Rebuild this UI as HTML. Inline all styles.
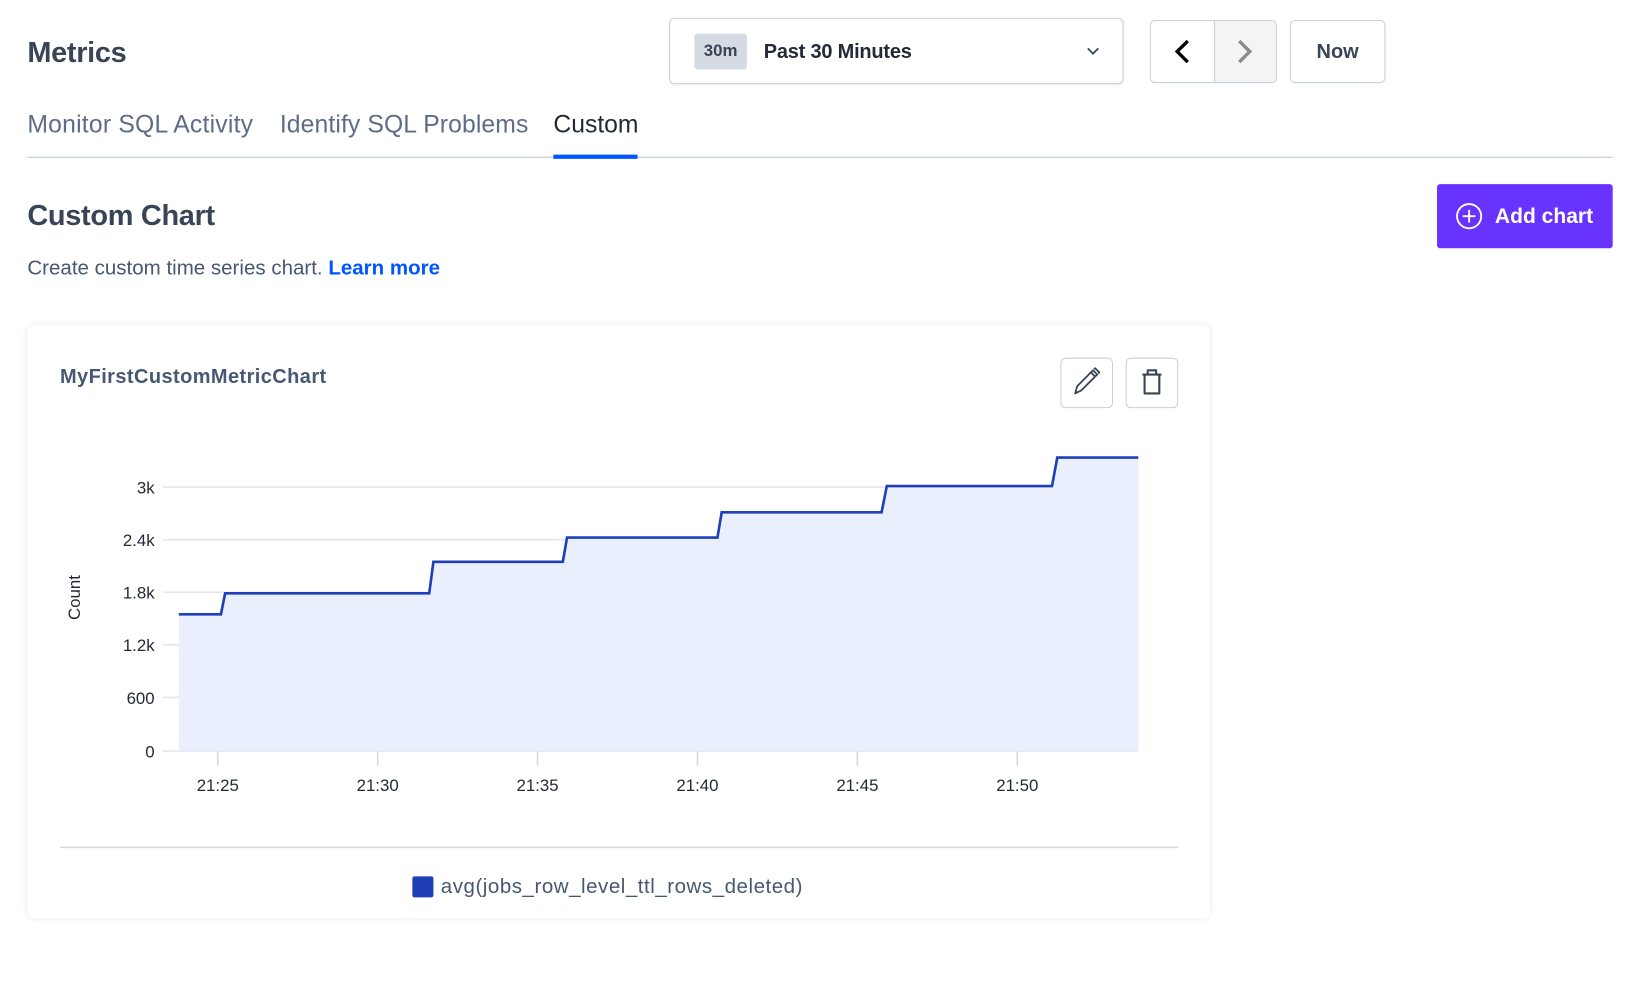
<!DOCTYPE html>
<html><head><meta charset="utf-8"><style>
html,body{margin:0;padding:0;background:#fff;width:1650px;height:982px;overflow:hidden}
#w{position:absolute;left:0;top:0;width:1560px;height:928px;transform:scale(1.052);transform-origin:0 0;font-family:"Liberation Sans",sans-serif;color:#394455}
.a{position:absolute;white-space:nowrap}
.box{position:absolute;border:1px solid #c9cfdb;border-radius:5px;background:#fff;box-sizing:border-box}
</style></head><body><div id="w">
<div class="a" style="left:26px;top:34px;font-size:27.5px;font-weight:bold;color:#394455;letter-spacing:-0.3px">Metrics</div>

<div class="box" style="left:636px;top:17px;width:432px;height:63px;box-shadow:0 1px 3px rgba(0,0,0,.06)"></div>
<div class="a" style="left:660px;top:32px;width:50px;height:34px;background:#d6dae3;border-radius:3px;font-size:16px;font-weight:bold;line-height:34px;text-align:center;color:#394455">30m</div>
<div class="a" style="left:726px;top:39px;font-size:19px;font-weight:bold;color:#242a35;letter-spacing:-0.2px">Past 30 Minutes</div>
<svg class="a" style="left:1032px;top:44px" width="14" height="10"><path d="M2 2 L7 7 L12 2" fill="none" stroke="#394455" stroke-width="1.6"/></svg>

<div class="box" style="left:1093px;top:19px;width:121px;height:60px;overflow:hidden"><div style="position:absolute;left:60px;top:0;width:61px;height:60px;background:#f4f4f5;border-left:1px solid #c9cfdb"></div></div>
<svg class="a" style="left:1112px;top:36px" width="24" height="26"><path d="M17 3 L7 13 L17 23" fill="none" stroke="#000" stroke-width="3.2"/></svg>
<svg class="a" style="left:1171px;top:36px" width="24" height="26"><path d="M7 3 L17 13 L7 23" fill="none" stroke="#8a8a8a" stroke-width="3.2"/></svg>
<div class="box" style="left:1226px;top:19px;width:91px;height:60px;font-size:19px;font-weight:bold;line-height:60px;text-align:center;color:#394455">Now</div>

<div class="a" style="left:26px;top:105px;font-size:23.5px;color:#5f6c87;letter-spacing:0.2px">Monitor SQL Activity</div>
<div class="a" style="left:266px;top:105px;font-size:23.5px;color:#5f6c87;letter-spacing:0.1px">Identify SQL Problems</div>
<div class="a" style="left:526px;top:105px;font-size:23.5px;color:#242a35;letter-spacing:0px">Custom</div>
<div class="a" style="left:26px;top:149px;width:1507px;height:1px;background:#c0c6d9"></div>
<div class="a" style="left:526px;top:147px;width:80px;height:4px;background:#0055ff"></div>

<div class="a" style="left:26px;top:189px;font-size:27.5px;font-weight:bold;color:#394455;letter-spacing:-0.3px">Custom Chart</div>
<div class="a" style="left:1366px;top:175px;width:167px;height:61px;background:#6933ff;border-radius:3px"></div>
<svg class="a" style="left:1383px;top:192px" width="27" height="27"><circle cx="13.5" cy="13.5" r="11.5" fill="none" stroke="#fff" stroke-width="1.8"/><path d="M13.5 7.5V19.5M7.5 13.5H19.5" stroke="#fff" stroke-width="1.8"/></svg>
<div class="a" style="left:1421px;top:195px;font-size:20px;font-weight:bold;color:#fff">Add chart</div>
<div class="a" style="left:26px;top:244px;font-size:19.5px;color:#475872;letter-spacing:0px">Create custom time series chart. <span style="color:#0055ff;font-weight:bold">Learn more</span></div>

<div class="a" style="left:26px;top:309px;width:1124px;height:564px;background:#fff;border-radius:6px;box-shadow:0 0 6px rgba(0,0,0,.09)"></div>
<div class="a" style="left:57px;top:348px;font-size:19px;font-weight:bold;color:#475872;letter-spacing:0.4px">MyFirstCustomMetricChart</div>
<div class="box" style="left:1008px;top:340px;width:50px;height:48px"></div>
<div class="box" style="left:1070px;top:340px;width:50px;height:48px"></div>
<svg class="a" style="left:1008px;top:340px" width="50" height="48"><path d="M14 34 L16 27 L31 12 L35 16 L20 31 Z M29 14 L33 18 M32 11 L33 10 L37 14 L36 15" fill="none" stroke="#394455" stroke-width="1.7" stroke-linejoin="round"/></svg>
<svg class="a" style="left:1070px;top:340px" width="50" height="48"><path d="M16 16 H34 M21 16 V12 H29 V16 M18 16 V34 H32 V16" fill="none" stroke="#394455" stroke-width="2" stroke-linejoin="round"/></svg>

<svg class="a" style="left:0;top:0" width="1560" height="928">
<g stroke="#e3e6ea" stroke-width="1.5"><path d="M155 463H1082M155 513H1082M155 563H1082M155 613H1082M155 663H1082M155 714H1082"/></g>
<path d="M170,584 H210 L214,564 H408 L412,534 H535 L539,511 H682 L686,487 H838 L843,462 H1000 L1005,435 H1082 V714 H170 Z" fill="#e9effd"/>
<path d="M170,584 H210 L214,564 H408 L412,534 H535 L539,511 H682 L686,487 H838 L843,462 H1000 L1005,435 H1082" fill="none" stroke="#1f3fb8" stroke-width="2.5"/>
<g stroke="#d6d9de" stroke-width="1.5"><path d="M207 714V728M359 714V728M511 714V728M663 714V728M815 714V728M967 714V728"/></g>
<g font-family="Liberation Sans,sans-serif" font-size="16" fill="#242a35" text-anchor="end">
<text x="147" y="469">3k</text><text x="147" y="519">2.4k</text><text x="147" y="569">1.8k</text><text x="147" y="619">1.2k</text><text x="147" y="669">600</text><text x="147" y="720">0</text></g>
<g font-family="Liberation Sans,sans-serif" font-size="16" fill="#242a35" text-anchor="middle">
<text x="207" y="752">21:25</text><text x="359" y="752">21:30</text><text x="511" y="752">21:35</text><text x="663" y="752">21:40</text><text x="815" y="752">21:45</text><text x="967" y="752">21:50</text>
<text transform="translate(76,568) rotate(-90)" font-size="16">Count</text></g>
<path d="M57 805.5H1120" stroke="#d6d9e2" stroke-width="1.5"/>
<rect x="392" y="833" width="20" height="20" rx="2" fill="#1f3fb8"/>
</svg>
<div class="a" style="left:419px;top:832px;font-size:19.5px;color:#475872;letter-spacing:0.5px">avg(jobs_row_level_ttl_rows_deleted)</div>
</div></body></html>
